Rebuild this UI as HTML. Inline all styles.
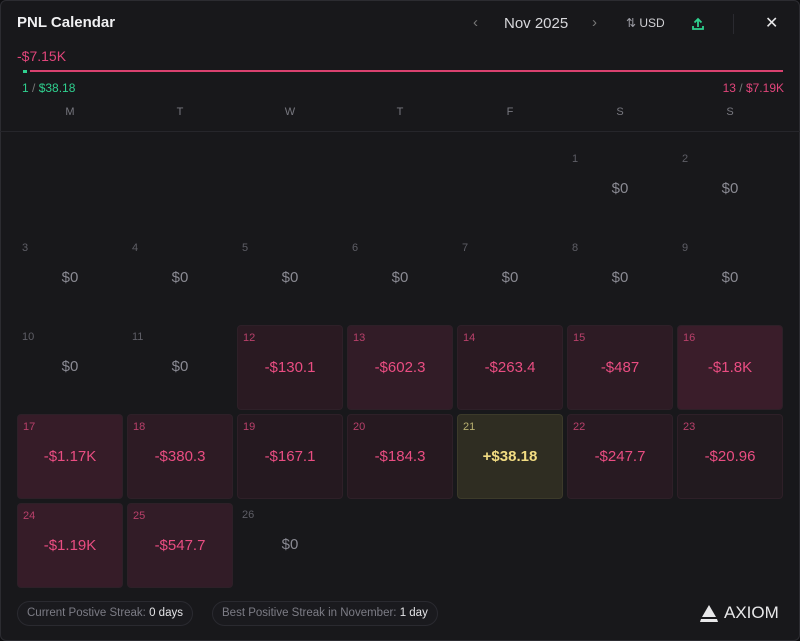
<!DOCTYPE html>
<html><head><style>
*{margin:0;padding:0;box-sizing:border-box}
body{width:800px;height:641px;background:#0e0e10;font-family:"Liberation Sans",sans-serif;overflow:hidden}
.wrap{position:absolute;left:0;top:0;width:800px;height:641px;background:#18181b;box-shadow:inset 0 0 0 1px #2c2c31;border-radius:6px}
.t{position:absolute;white-space:nowrap}
.cell{position:absolute;width:106px;height:85px;border-radius:4px}
.cell .d{position:absolute;left:5px;top:6px;font-size:11px;color:#5e5e66}
.cell .v{position:absolute;left:0;right:0;top:33px;text-align:center;font-size:15px;color:#8a8a93}
.l .d{color:#b8406a}.l .v{color:#ea4d82}
.pill{position:absolute;top:601px;height:25px;border:1px solid #2a2a30;border-radius:13px;font-size:11.5px;color:#7c7c85;line-height:23px;padding:0 9px;background:#1a1a1e}
.pill b{color:#e4e4e7;font-weight:normal}
</style></head><body><div class="wrap">
<div class="t" style="left:17px;top:14px;font-size:15px;font-weight:bold;color:#f0f0f2">PNL Calendar</div>
<div class="t" style="left:473px;top:14px;font-size:15px;color:#777">‹</div>
<div class="t" style="left:504px;top:15px;font-size:15px;color:#d8d8dc">Nov 2025</div>
<div class="t" style="left:592px;top:14px;font-size:15px;color:#777">›</div>
<div class="t" style="left:626px;top:16px;font-size:12px;color:#9a9aa2">⇅ <span style="color:#d0d0d4">USD</span></div>
<svg class="t" style="left:690px;top:16px" width="16" height="16" viewBox="0 0 16 16" fill="none" stroke="#2fd08f" stroke-width="1.8"><path d="M8 11V3M4.5 6.5L8 3l3.5 3.5M3 10v3h10v-3"/></svg>
<div class="t" style="left:733px;top:14px;width:1px;height:20px;background:#2a2a30"></div>
<div class="t" style="left:765px;top:13px;font-size:16px;color:#e8e8ea">✕</div>
<div class="t" style="left:17px;top:48px;font-size:14px;color:#e0457a">-$7.15K</div>
<div class="t" style="left:23px;top:70px;width:4px;height:3px;background:#2fd08f"></div>
<div class="t" style="left:30px;top:70px;width:753px;height:2px;background:#d9416f"></div>
<div class="t" style="left:22px;top:81px;font-size:12px;color:#2fd08f">1 <span style="color:#777">/</span> $38.18</div>
<div class="t" style="right:16px;top:81px;font-size:12px;color:#e0457a">13 <span style="color:#777">/</span> $7.19K</div>
<div class="t" style="left:0;top:131px;width:800px;height:1px;background:#26262b"></div>
<div id="g"></div>
<div class="pill" style="left:17px">Current Postive Streak: <b>0 days</b></div>
<div class="pill" style="left:212px">Best Positive Streak in November: <b>1 day</b></div>
<svg class="t" style="left:699px;top:605px" width="20" height="17" viewBox="0 0 20 17"><path d="M10 0L3 12h14z" fill="#e8e8ea"/><path d="M2 14h16l1 3H1z" fill="#e8e8ea"/></svg>
<div class="t" style="left:724px;top:603px;font-size:17px;color:#e8e8ea">AXIOM</div>
</div>
<script>
var days="MTWTFSS",h="";
for(var i=0;i<7;i++)h+='<div class="t" style="left:'+(17+i*110)+'px;width:106px;text-align:center;top:106px;font-size:11px;color:#77777f">'+days[i]+'</div>';
var data={1:"$0",2:"$0",3:"$0",4:"$0",5:"$0",6:"$0",7:"$0",8:"$0",9:"$0",10:"$0",11:"$0",12:"-$130.1",13:"-$602.3",14:"-$263.4",15:"-$487",16:"-$1.8K",17:"-$1.17K",18:"-$380.3",19:"-$167.1",20:"-$184.3",21:"+$38.18",22:"-$247.7",23:"-$20.96",24:"-$1.19K",25:"-$547.7",26:"$0"};
var bg={12:"#2a1a22",13:"#321c27",14:"#2a1a22",15:"#2d1b24",16:"#3a1d2a",17:"#361c28",18:"#2d1b24",19:"#251920",20:"#261920",22:"#281a22",23:"#221a1f",24:"#361c28",25:"#321c27"};
for(var d=1;d<=26;d++){var p=d+4,c=p%7,r=Math.floor(p/7);
var x=17+c*110,y=147+r*89,v=data[d],cls="cell",st="left:"+x+"px;top:"+y+"px;";
if(bg[d]){cls+=" l";st+="background:"+bg[d]+";border:1px solid #2e2028;"}
var vs="",ds="";
if(d==21){st+="background:#2f2d22;border:1px solid #3c3a2a;";vs="color:#f2dc82;font-weight:bold";ds="color:#b8b070"}
h+='<div class="'+cls+'" style="'+st+'"><div class="d" style="'+ds+'">'+d+'</div><div class="v" style="'+vs+'">'+v+'</div></div>';}
document.getElementById("g").innerHTML=h;
</script>
</body></html>
